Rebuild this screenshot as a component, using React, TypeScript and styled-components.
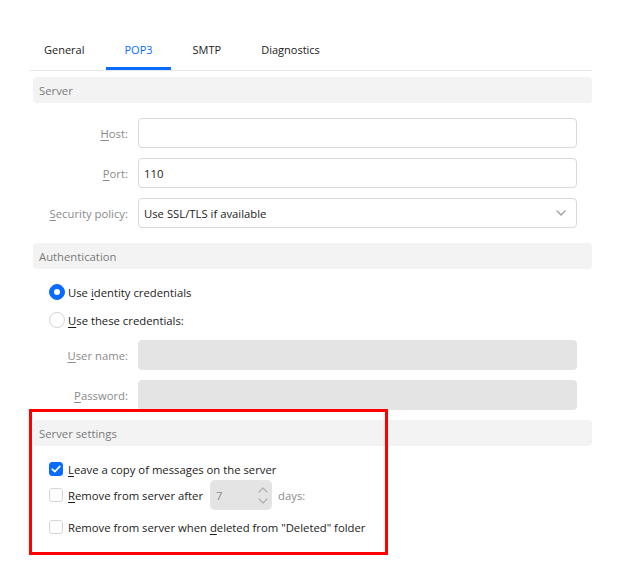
import React from "react";
import styled, { createGlobalStyle } from "styled-components";

const FS = "11.3px";

const Global = createGlobalStyle`
  html, body { margin: 0; padding: 0; background: #ffffff; }
  body { font-family: "Open Sans", "Noto Sans", sans-serif; font-size: ${FS}; color: #1b1b1b; }
  * { box-sizing: border-box; }
`;

const Page = styled.div`
  position: relative;
  width: 625px;
  height: 585px;
  padding: 30px 33px 0 33px;
`;

const TabBar = styled.div`
  display: flex;
  gap: 4px;
  height: 41px;
  margin-left: -3px;
  border-bottom: 1px solid #e6e6e6;
`;

const Tab = styled.div<{ $active?: boolean; $first?: boolean }>`
  position: relative;
  display: flex;
  align-items: center;
  padding: 0 18px 2px;
  margin-left: ${(p) => (p.$first ? "-4px" : "0")};
  font-size: 11px;
  color: ${(p) => (p.$active ? "#0a6cff" : "#1b1b1b")};
  &::after {
    content: "";
    display: ${(p) => (p.$active ? "block" : "none")};
    position: absolute;
    left: 0;
    right: 0;
    bottom: 0;
    height: 3px;
    background: #0a6cff;
  }
`;

const SectionHeader = styled.div<{ $mt?: number }>`
  height: 26px;
  margin-top: ${(p) => p.$mt ?? 0}px;
  background: #f3f3f3;
  border-radius: 4px;
  display: flex;
  align-items: center;
  padding-left: 6px;
  color: #7a7a7a;
  font-size: ${FS};
`;

const Form = styled.div<{ $pt?: number }>`
  display: flex;
  flex-direction: column;
  gap: 10px;
  padding: ${(p) => p.$pt ?? 15}px 15px 0 0;
`;

const FieldRow = styled.div`
  display: grid;
  grid-template-columns: 95px 1fr;
  column-gap: 10px;
  align-items: center;
  height: 30px;
`;

const Label = styled.label`
  text-align: right;
  color: #8a8a8a;
  font-size: ${FS};
  u { text-decoration: underline; text-underline-offset: 2px; }
`;

const Input = styled.div<{ $disabled?: boolean }>`
  height: 30px;
  border: 1px solid ${(p) => (p.$disabled ? "#e4e4e4" : "#d9d9d9")};
  background: ${(p) => (p.$disabled ? "#e4e4e4" : "#ffffff")};
  border-radius: 4px;
  display: flex;
  align-items: center;
  padding: 0 10px 0 5px;
  font-size: ${FS};
  color: #1b1b1b;
  justify-content: space-between;
`;

const RadioGroup = styled.div`
  display: flex;
  flex-direction: column;
  gap: 12px;
  padding: 15px 0 5px 16px;
`;

const OptionRow = styled.div`
  display: flex;
  align-items: center;
  gap: 3px;
  font-size: ${FS};
  color: #1b1b1b;
  white-space: nowrap;
  u { text-decoration: underline; text-underline-offset: 2px; }
`;

const Radio = styled.span<{ $checked?: boolean }>`
  width: 16px;
  height: 16px;
  border-radius: 50%;
  flex: none;
  background: ${(p) => (p.$checked ? "#0a6cff" : "#ffffff")};
  border: 1px solid ${(p) => (p.$checked ? "#0a6cff" : "#d6d6d6")};
  display: flex;
  align-items: center;
  justify-content: center;
  &::after {
    content: "";
    display: ${(p) => (p.$checked ? "block" : "none")};
    width: 6px;
    height: 6px;
    border-radius: 50%;
    background: #ffffff;
  }
`;

const CheckGroup = styled.div`
  display: flex;
  flex-direction: column;
  padding: 16px 0 0 16px;
`;

const CheckRow = styled(OptionRow)<{ $h: number; $mt?: number }>`
  height: ${(p) => p.$h}px;
  margin-top: ${(p) => p.$mt ?? 0}px;
  gap: 5px;
`;

const Checkbox = styled.span<{ $checked?: boolean }>`
  width: 14px;
  height: 14px;
  flex: none;
  border-radius: 3px;
  background: ${(p) => (p.$checked ? "#0a6cff" : "#ffffff")};
  border: 1px solid ${(p) => (p.$checked ? "#0a6cff" : "#d6d6d6")};
  display: flex;
  align-items: center;
  justify-content: center;
`;

const Spinner = styled.div`
  width: 62px;
  height: 30px;
  margin-left: 2px;
  background: #e4e4e4;
  border-radius: 5px;
  display: flex;
  align-items: center;
  justify-content: space-between;
  padding: 0 4px 0 6px;
  color: #8a8a8a;
  font-size: ${FS};
`;

const SpinArrows = styled.div`
  display: flex;
  flex-direction: column;
  gap: 5px;
`;

const Days = styled.span`
  color: #8a8a8a;
  margin-left: 1px;
`;

const Highlight = styled.div`
  position: absolute;
  left: 29px;
  top: 409px;
  width: 359px;
  height: 146px;
  border: 3px solid #ff0000;
  pointer-events: none;
`;

const Chevron = ({ up, color = "#9a9a9a" }: { up?: boolean; color?: string }) => (
  <svg width="10" height="6" viewBox="0 0 10 6">
    <path
      d={up ? "M1 5 L5 1 L9 5" : "M1 1 L5 5 L9 1"}
      fill="none"
      stroke={color}
      strokeWidth="1.2"
      strokeLinecap="round"
      strokeLinejoin="round"
    />
  </svg>
);

const Check = () => (
  <svg width="10" height="8" viewBox="0 0 10 8">
    <path d="M1.2 4.2 L3.8 6.6 L8.8 1.4" fill="none" stroke="#fff" strokeWidth="1.6" strokeLinecap="round" strokeLinejoin="round" />
  </svg>
);

export default function App() {
  return (
    <>
      <Global />
      <Page>
        <TabBar>
          <Tab $first>General</Tab>
          <Tab $active>POP3</Tab>
          <Tab>SMTP</Tab>
          <Tab>Diagnostics</Tab>
        </TabBar>

        <SectionHeader $mt={6}>Server</SectionHeader>
        <Form>
          <FieldRow>
            <Label><u>H</u>ost:</Label>
            <Input />
          </FieldRow>
          <FieldRow>
            <Label><u>P</u>ort:</Label>
            <Input>110</Input>
          </FieldRow>
          <FieldRow>
            <Label><u>S</u>ecurity policy:</Label>
            <Input>
              <span>Use SSL/TLS if available</span>
              <Chevron />
            </Input>
          </FieldRow>
        </Form>

        <SectionHeader $mt={15}>Authentication</SectionHeader>
        <RadioGroup>
          <OptionRow>
            <Radio $checked />
            <span>Use <u>i</u>dentity credentials</span>
          </OptionRow>
          <OptionRow>
            <Radio />
            <span><u>U</u>se these credentials:</span>
          </OptionRow>
        </RadioGroup>
        <Form $pt={7}>
          <FieldRow>
            <Label><u>U</u>ser name:</Label>
            <Input $disabled />
          </FieldRow>
          <FieldRow>
            <Label><u>P</u>assword:</Label>
            <Input $disabled />
          </FieldRow>
        </Form>

        <SectionHeader $mt={10}>Server settings</SectionHeader>
        <CheckGroup>
          <CheckRow $h={14}>
            <Checkbox $checked><Check /></Checkbox>
            <span><u>L</u>eave a copy of messages on the server</span>
          </CheckRow>
          <CheckRow $h={30} $mt={4}>
            <Checkbox />
            <span><u>R</u>emove from server after</span>
            <Spinner>
              <span>7</span>
              <SpinArrows>
                <Chevron up color="#b0b0b0" />
                <Chevron color="#b0b0b0" />
              </SpinArrows>
            </Spinner>
            <Days>days:</Days>
          </CheckRow>
          <CheckRow $h={14} $mt={10}>
            <Checkbox />
            <span>Remove from server when <u>d</u>eleted from "Deleted" folder</span>
          </CheckRow>
        </CheckGroup>
        <Highlight />
      </Page>
    </>
  );
}
